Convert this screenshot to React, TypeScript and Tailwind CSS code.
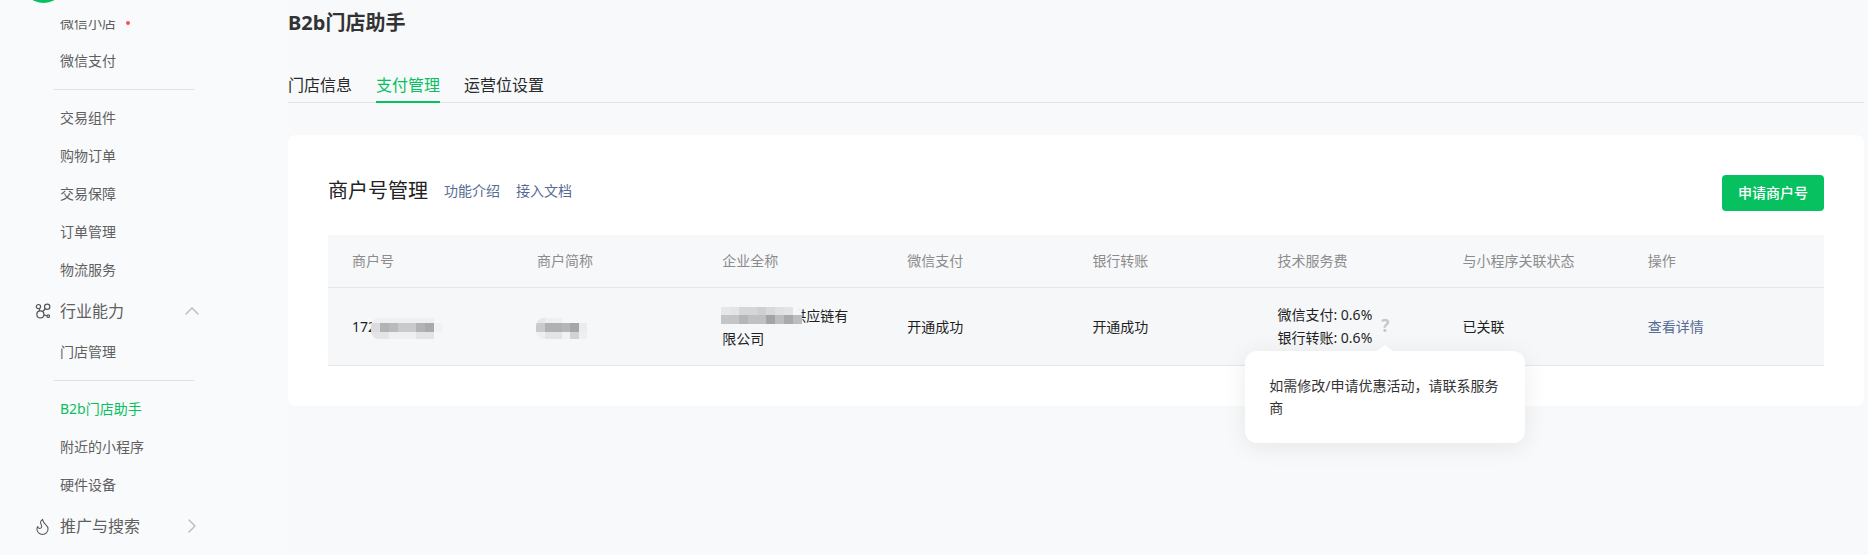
import React from 'react';
import { ChevronUp, ChevronRight, Flame } from 'lucide-react';

const L = 'bg-[#eeeff1]';
const M = 'bg-[#e3e4e6]';

// pixelated patches that hide the merchant details
const idMosaic = [
  [L, L, L, L, L, L, L, 'bg-[#f6f7f9]'],
  ['bg-[#dcdcde]', 'bg-[#b2b3b5]', 'bg-[#b9babc]', 'bg-[#c9cacc]', 'bg-[#c9cacc]', 'bg-[#b2b3b5]', 'bg-[#a9aaac]', 'bg-[#f1f2f4]'],
  [M, M, L, L, L, M, M, 'bg-[#f6f7f9]'],
];
const nameMosaic = [
  ['bg-[#e6e7e9]', L, L, 'bg-[#f6f7f9]', 'bg-[#f6f7f9]', 'bg-[#f6f7f9]'],
  ['bg-[#c9cacc]', 'bg-[#b0b1b3]', 'bg-[#b0b1b3]', 'bg-[#b5b6b8]', 'bg-[#a5a6a8]', 'bg-[#ebecee]'],
  [L, M, M, 'bg-[#f1f2f4]', 'bg-[#d2d3d5]', L],
];
const companyMosaic = [
  ['bg-[#e6e7e9]', M, 'bg-[#d5d6d8]', 'bg-[#d5d6d8]', 'bg-[#cfd0d2]', 'bg-[#d8d9db]', 'bg-[#dfe0e2]', M, 'bg-[#f6f7f9]'],
  ['bg-[#c4c5c7]', 'bg-[#c4c5c7]', 'bg-[#b5b6b8]', 'bg-[#bfc0c2]', 'bg-[#bfc0c2]', 'bg-[#a3a4a6]', 'bg-[#bcbdbf]', 'bg-[#a9aaac]', 'bg-[#bcbdbf]'],
];

function Mosaic({ rows, className }: { rows: string[][]; className: string }) {
  return (
    <div className={className}>
      {rows.flat().map((c, i) => (
        <div key={i} className={c} />
      ))}
    </div>
  );
}

function NavItem({ label, active, dot }: { label: string; active?: boolean; dot?: boolean }) {
  return (
    <div className={`flex h-[38px] items-center pl-[60px] text-sm ${active ? 'text-[#07c160]' : 'text-[#5f5f5f]'}`}>
      {label}
      {dot && <span className="ml-[10px] h-1 w-1 rounded-full bg-[#fa5151]" />}
    </div>
  );
}

function NavGroup({ label, icon, chevron }: { label: string; icon: React.ReactNode; chevron: React.ReactNode }) {
  return (
    <div className="ml-[31px] flex h-[44px] w-[173px] items-center text-base text-[#5f5f5f]">
      <span className="flex w-[22px] justify-center">{icon}</span>
      <span className="ml-[7px] flex-1">{label}</span>
      {chevron}
    </div>
  );
}

function Divider() {
  return <div className="my-[9px] ml-[54px] h-px w-[140px] bg-[#dfe0e3]" />;
}

function Sidebar() {
  return (
    <aside className="relative h-[555px] w-[288px] shrink-0 overflow-hidden bg-[#f9fafc] pt-1">
      <div className="absolute top-0 left-0 h-5 w-full overflow-hidden bg-[#f9fafc]">
        <div className="absolute -top-[40px] left-[22px] h-[43px] w-[43px] rounded-full bg-[#07c160]" />
      </div>
      <NavItem label="微信小店" dot />
      <NavItem label="微信支付" />
      <Divider />
      <NavItem label="交易组件" />
      <NavItem label="购物订单" />
      <NavItem label="交易保障" />
      <NavItem label="订单管理" />
      <NavItem label="物流服务" />
      <NavGroup
        label="行业能力"
        icon={
          <svg width="17" height="17" viewBox="0 0 16 16" fill="none" stroke="#555" strokeWidth="1.15">
            <circle cx="6" cy="10.8" r="3.3" />
            <circle cx="4.2" cy="3.4" r="2" />
            <circle cx="12.4" cy="3.6" r="2.5" />
            <circle cx="13.4" cy="12.4" r="1.2" />
            <path d="M4.8 5.3l.8 2.2M10.6 5.4l-2.6 3M9.3 11.2l3 .8" />
          </svg>
        }
        chevron={<ChevronUp size={24} strokeWidth={1.3} className="text-[#b8b8b8]" />}
      />
      <NavItem label="门店管理" />
      <Divider />
      <NavItem label="B2b门店助手" active />
      <NavItem label="附近的小程序" />
      <NavItem label="硬件设备" />
      <NavGroup
        label="推广与搜索"
        icon={<Flame size={19} strokeWidth={1.3} className="text-[#555]" />}
        chevron={<ChevronRight size={24} strokeWidth={1.3} className="text-[#b8b8b8]" />}
      />
    </aside>
  );
}

const columns = ['商户号', '商户简称', '企业全称', '微信支付', '银行转账', '技术服务费', '与小程序关联状态', '操作'];
const gridCols = 'grid grid-cols-[repeat(7,185.1px)_1fr] pl-6';

function MerchantTable() {
  return (
    <div className="mt-6 text-sm">
      <div className={`${gridCols} h-[53px] items-center border-b border-[#e4e5e8] bg-[#f7f8fa] text-[#8c8c8c]`}>
        {columns.map((c) => (
          <div key={c}>{c}</div>
        ))}
      </div>
      <div className={`${gridCols} h-[78px] items-center border-b border-[#e4e5e8] bg-[#f6f7f9] text-[#1f1f1f]`}>
        <div className="relative">
          172888888
          <Mosaic
            rows={idMosaic}
            className="absolute top-[1px] left-[19px] grid grid-cols-[repeat(8,9px)] grid-rows-[5px_9px_7px] overflow-hidden rounded-l-[8px]"
          />
        </div>
        <div>
          <Mosaic
            rows={nameMosaic}
            className="-ml-[1px] mt-1 grid w-fit grid-cols-[repeat(6,8.5px)] grid-rows-[5px_9px_7px] overflow-hidden rounded-l-[8px]"
          />
        </div>
        <div className="relative w-[137px] leading-[23px]">
          某某某某某供应链有限公司
          <Mosaic
            rows={companyMosaic}
            className="absolute top-[3px] -left-px grid grid-cols-[repeat(9,9px)] grid-rows-[8px_9px] overflow-hidden rounded-tr-[8px]"
          />
        </div>
        <div>开通成功</div>
        <div>开通成功</div>
        <div className="flex items-center leading-[23px]">
          <div className="-mt-[2px]">
            <div>微信支付: 0.6%</div>
            <div>银行转账: 0.6%</div>
          </div>
          <div className="relative ml-[9px]">
            <span className="text-[17px] leading-[22px] font-bold text-[#c8c8c8]">?</span>
            <div className="absolute top-full left-1/2 z-10 mt-[13px] w-[280px] -translate-x-1/2 rounded-xl bg-white p-6 leading-[22px] text-[#333] shadow-[0_4px_24px_rgba(0,0,0,0.08)]">
              <span className="absolute -top-[6px] left-1/2 -ml-2 h-0 w-0 border-x-8 border-b-[6px] border-x-transparent border-b-white" />
              如需修改/申请优惠活动，请联系服务商
            </div>
          </div>
        </div>
        <div>已关联</div>
        <div className="text-[#576b95]">查看详情</div>
      </div>
    </div>
  );
}

export default function App() {
  return (
    <div className="flex h-[555px] w-[1868px] overflow-hidden bg-[#f8f9fb] [font-family:'Noto_Sans','Noto_Sans_CJK_SC',sans-serif]">
      <Sidebar />
      <main className="mr-1 flex-1 pt-[9px]">
        <h1 className="text-xl leading-7 font-bold text-[#333]">B2b门店助手</h1>

        <div className="mt-[36px] flex h-[30px] gap-6 border-b border-[#e2e3e6] text-base leading-6">
          <div className="text-[#2a2a2a]">门店信息</div>
          <div className="h-[30px] border-b-2 border-[#07c160] text-[#07c160]">支付管理</div>
          <div className="text-[#2a2a2a]">运营位设置</div>
        </div>

        <section className="mt-8 rounded-lg bg-white p-10">
          <div className="flex h-9 items-center justify-between">
            <div className="mb-[4px] flex items-center">
              <span className="text-xl text-[#222]">商户号管理</span>
              <a className="ml-4 text-sm text-[#576b95]">功能介绍</a>
              <a className="ml-4 text-sm text-[#576b95]">接入文档</a>
            </div>
            <button className="h-9 w-[102px] rounded bg-[#07c160] text-sm font-medium text-white">申请商户号</button>
          </div>
          <MerchantTable />
        </section>
      </main>
    </div>
  );
}
